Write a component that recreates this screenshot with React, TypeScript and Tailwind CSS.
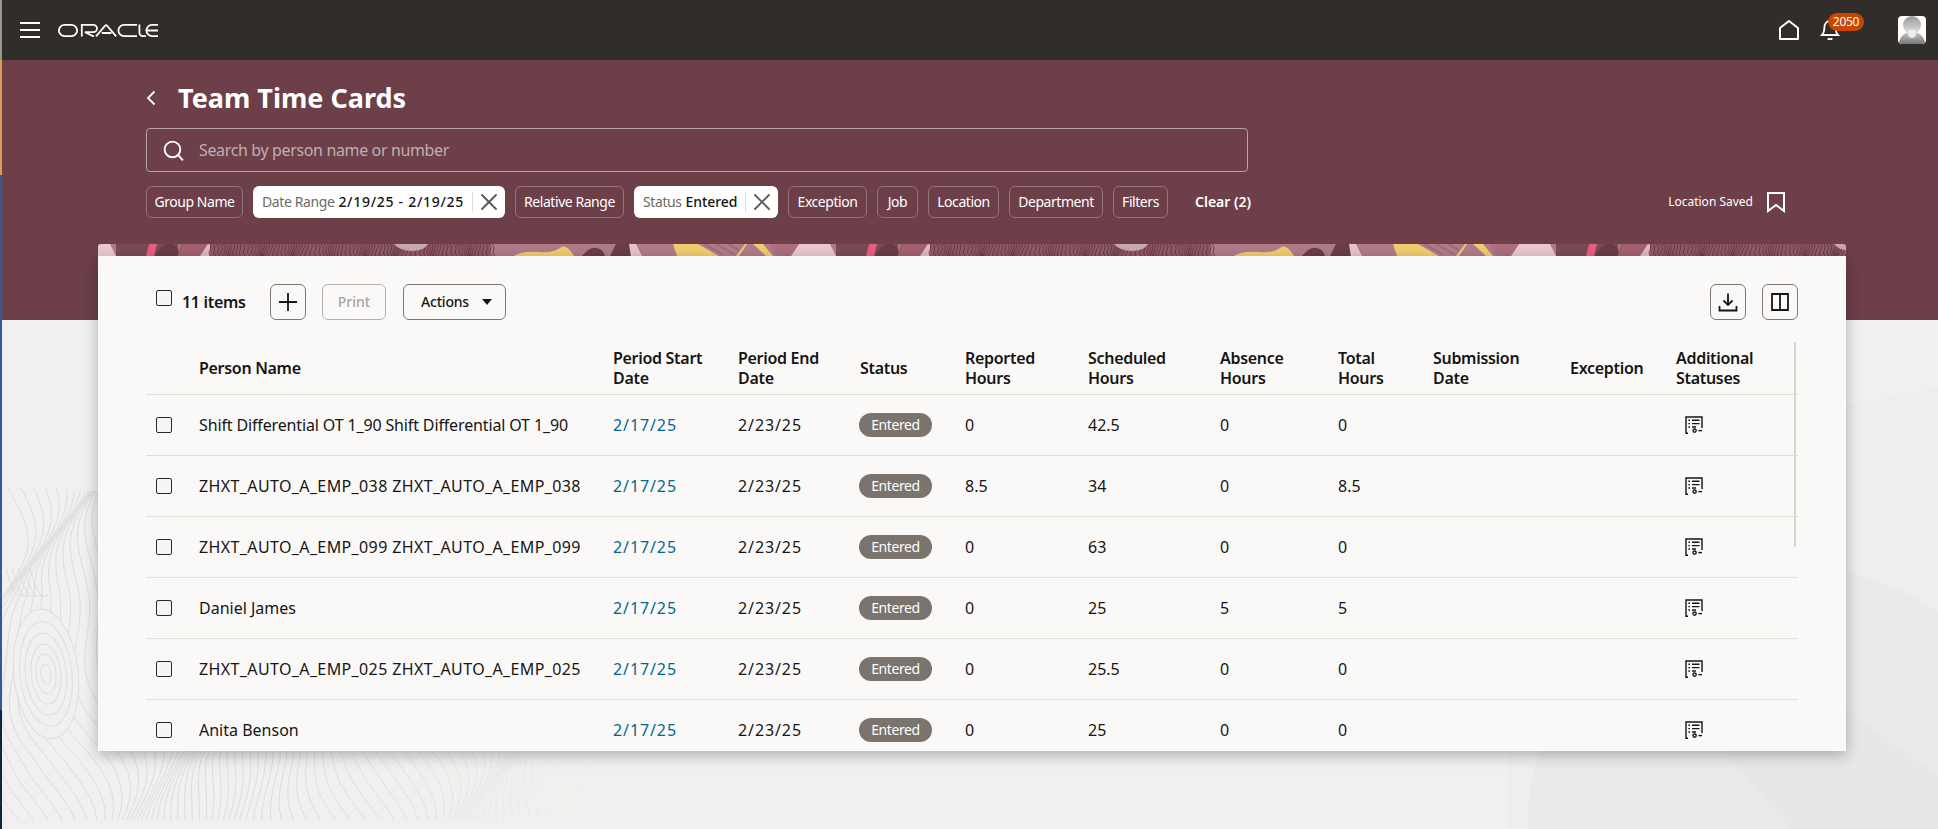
import { X } from "lucide-react";

const GRID =
  "grid grid-cols-[53px_414px_125px_122px_105px_123px_132px_118px_95px_137px_106px_122px]";

const rows = [
  { name: "Shift Differential OT 1_90 Shift Differential OT 1_90", nameClass: "tracking-[-0.14px]", reported: "0", scheduled: "42.5", absence: "0", total: "0" },
  { name: "ZHXT_AUTO_A_EMP_038 ZHXT_AUTO_A_EMP_038", nameClass: "tracking-[0.38px]", reported: "8.5", scheduled: "34", absence: "0", total: "8.5" },
  { name: "ZHXT_AUTO_A_EMP_099 ZHXT_AUTO_A_EMP_099", nameClass: "tracking-[0.38px]", reported: "0", scheduled: "63", absence: "0", total: "0" },
  { name: "Daniel James", nameClass: "", reported: "0", scheduled: "25", absence: "5", total: "5" },
  { name: "ZHXT_AUTO_A_EMP_025 ZHXT_AUTO_A_EMP_025", nameClass: "tracking-[0.38px]", reported: "0", scheduled: "25.5", absence: "0", total: "0" },
  { name: "Anita Benson", nameClass: "", reported: "0", scheduled: "25", absence: "0", total: "0" },
];

const headers = [
  "",
  "Person Name",
  "Period Start Date",
  "Period End Date",
  "Status",
  "Reported Hours",
  "Scheduled Hours",
  "Absence Hours",
  "Total Hours",
  "Submission Date",
  "Exception",
  "Additional Statuses",
];

function OracleLogo() {
  return (
    <svg width="100" height="13" viewBox="0 0 100 13" fill="none" stroke="#ffffff" strokeWidth="1.8" className="ml-[18px]">
      <rect x="0.9" y="0.9" width="18.2" height="11.2" rx="5.6" />
      <path d="M23.8 12.6V.9h11.5a3.4 3.4 0 0 1 0 7.3H27l9 4.4" />
      <path d="M38 12.4 47.2 1.6a1.2 1.2 0 0 1 1.8 0l9.2 10.8M43.8 9h9.6" />
      <path d="M79 .9H66a5.6 5.6 0 0 0 0 11.200h13" />
      <path d="M81.4.4V8.600a3.500 3.500 0 0 0 3.500 3.500h3" />
      <path d="M100 .9h-6a5.600 5.600 0 0 0 0 11.200h6M89.400 6.500H100" />
    </svg>
  );
}

function StatusIcon() {
  return (
    <svg width="18" height="18" viewBox="0 0 18 18" fill="none" stroke="#161513" strokeWidth="1.4" className="ml-[9px]">
      <path d="M3 17.200H1V1h16v11" />
      <path d="M3.400 4.200h1.600M7 4.200h7.500M3.400 7.600h1.600M7 7.600h7.500M3.400 11h1.600M7 11h4" />
      <circle cx="9.600" cy="14.600" r="1.600" />
      <path d="M13.400 14.600H17" />
    </svg>
  );
}

function Checkbox({ className = "" }: { className?: string }) {
  return <div className={`ml-[10px] h-4 w-4 rounded-[2px] border-[1.5px] border-[#2b2826] bg-[#f6f5f3] ${className}`} />;
}

// one 720px wide repeat of the banner strip above the card
function StripTile({ x }: { x: number }) {
  const lines = [];
  for (let i = 0; i < 95; i++) {
    const px = 112 + i * 3;
    const lean = 4 * Math.sin(i * 0.55) + 3 * Math.sin(i * 0.17);
    lines.push(
      <path
        key={i}
        d={`M${px} 0q${(lean / 2 + 2).toFixed(1)} 3 ${(lean / 2).toFixed(1)} 6t${(lean / 2).toFixed(1)} 6`}
        stroke="#5f343e"
        strokeWidth="0.8"
        fill="none"
      />,
    );
  }
  return (
    <g transform={`translate(${x} 0)`}>
      <rect width="720" height="12" fill="#b27c8a" />
      <rect x="18" width="62" height="12" fill="#7c4a55" />
      <path d="M0 0h12l6 12H0zM693 12 701 0h19v12z" fill="#ecc8d1" />
      <path d="M51 0h8l-3 12h-8z" fill="#e8607f" />
      <path d="M58 12q4-10 10-12h6q7 3 8 12z" fill="#6b3d47" />
      <path d="M82 0h28l-8 12H80z" fill="#a4606f" />
      <path d="M102 12 110 0h10v12z" fill="#e2bac5" />
      <rect x="112" width="280" height="12" fill="#93596a" />
      {lines}
      <path d="M296 0h34q-4 7-16 7t-18-7z" fill="#d3bac0" opacity="0.85" />
      <path d="M416 12q8-5 24-4t22-4 14 8z" fill="#f1ce6e" />
      <path d="M484 12q8-10 15-8t8 8z" fill="#6b3d47" />
      <path d="M512 12 518 0h13l2 12z" fill="#6b3d47" />
      <path d="M531 0h7l6 12h-11z" fill="#e7c4cd" />
      <path d="M575 0h25l21 12h-42z" fill="#f1ce6e" />
      <path d="M606 0l18 10M618 0l18 10M630 0l14 8" stroke="#a06a78" strokeWidth="2" />
      <path d="M638 12 647 0h2l-8 12z" fill="#f1ce6e" />
      <path d="M655 0h10l10 12h-7z" fill="#f1ce6e" />
      <path d="M672 0h29l-8 12h-14z" fill="#a4606f" opacity="0.45" />
    </g>
  );
}

// contour lines in the lower left of the page
function Contours() {
  const lines = [];
  for (let i = 0; i < 90; i++) {
    const x0 = -10 + i * 8;
    let d = "";
    for (let y = 490; y <= 835; y += 12) {
      const x =
        x0 +
        26 * Math.sin(y / 68 + i * 0.16) +
        11 * Math.sin(y / 27 + i * 0.3) +
        (y > 600 && y < 760 ? 22 * Math.sin((i - 14) / 7) * Math.sin(((y - 600) / 160) * Math.PI) : 0);
      d += `${d ? "L" : "M"}${x.toFixed(1)} ${y}`;
    }
    const opacity = x0 < 320 ? 1 : Math.max(0, 1 - (x0 - 320) / 300);
    lines.push(<path key={i} d={d} opacity={opacity} />);
  }
  const rings = [8, 16, 24, 33, 42, 52].map((r) => (
    <ellipse key={r} cx="44" cy="680" rx={r * 0.62} ry={r * 1.25} transform="rotate(-6 44 680)" fill="#f1f0ee" />
  ));
  const hatch = [0, 1, 2, 3, 4].map((i) => (
    <path key={i} d={`M${4 + i * 6} 575q4 14 8 22t10 4`} />
  ));
  return (
    <svg width="700" height="345" viewBox="0 490 700 345" fill="none" stroke="#dfdddb" strokeWidth="1" className="absolute bottom-0 left-[2px]">
      {lines}
      {rings.slice().reverse()}
      {hatch}
      <path d="M0 470h700v85Q420 530 230 510T0 494z" fill="#f1f0ee" stroke="none" />
    </svg>
  );
}

function Backdrop() {
  return (
    <>
      <div className="absolute top-[320px] bottom-0 left-0 right-0 bg-[#f1f0ee]" />
      <Contours />
      <svg width="430" height="509" viewBox="1508 320 430 509" className="absolute right-0 bottom-0">
        <path d="M1508 470 1938 387V829H1508z" fill="#efeeec" />
        <circle cx="1790" cy="829" r="263" fill="#ebeae8" />
        <path d="M1468 443 1938 775V829H1790z" fill="#e8e7e5" />
      </svg>
      <div className="absolute top-0 bottom-0 left-0 z-20 flex w-[2px] flex-col">
        <div className="h-[60px] bg-[#9a9793]" />
        <div className="h-[115px] bg-[#e29a4f]" />
        <div className="h-[535px] bg-[#2f5c93]" />
        <div className="flex-1 bg-[#142440]" />
      </div>
    </>
  );
}

function Chip({ label, width }: { label: string; width: string }) {
  return (
    <div className={`flex h-8 items-center justify-center rounded-md border border-[#96747c] text-sm tracking-[-0.45px] text-white ${width}`}>
      {label}
    </div>
  );
}

function ActiveChip({ label, value, width, valueClass }: { label: string; value: string; width: string; valueClass: string }) {
  return (
    <div className={`flex h-8 items-center rounded-md bg-white pl-[9px] text-sm ${width}`}>
      <span className="tracking-[-0.4px] text-[#6f6965]">{label}</span>
      <span className={`ml-1 whitespace-nowrap font-medium text-[#161513] ${valueClass}`}>{value}</span>
      <span className="ml-2 h-5 w-px shrink-0 bg-[#dcd9d6]" />
      <X className="ml-[2px] h-7 w-7 shrink-0 text-[#5f5a57]" strokeWidth={1.6} />
    </div>
  );
}

export default function App() {
  return (
    <div className="relative h-[829px] w-full overflow-hidden bg-[#f1f0ee] font-['Noto_Sans',sans-serif] text-[#161513]">
      <Backdrop />

      <header className="relative z-10 flex h-[60px] items-center bg-[#312d2a] pl-5">
        <div className="flex w-5 flex-col gap-[5px]">
          <span className="h-[2px] bg-white" />
          <span className="h-[2px] bg-white" />
          <span className="h-[2px] bg-white" />
        </div>
        <OracleLogo />
        <div className="ml-auto flex items-center">
          <svg width="22" height="22" viewBox="0 0 22 22" fill="none" stroke="#ffffff" strokeWidth="2" className="-ml-[2px]">
            <path d="M2 20V9l9-7 9 7v11z" strokeLinejoin="round" />
          </svg>
          <div className="relative ml-[20px] h-[22px] w-[20px]">
            <svg width="20" height="22" viewBox="0 0 20 22" fill="none" stroke="#ffffff" strokeWidth="1.8">
              <path d="M2 16c2-2 2.400-4 2.400-7.400C4.400 4.800 6.800 2 10 2s5.600 2.800 5.600 6.600c0 3.400.4 5.400 2.400 7.400z" />
              <path d="M7.600 19.400q2.400 1.600 4.800 0" />
            </svg>
            <div className="absolute -top-[6px] left-[8px] flex h-[18px] w-9 items-center justify-center rounded-full bg-[#c74600] text-[12px] tracking-[-0.3px] text-white">
              2050
            </div>
          </div>
          <div className="relative ml-[58px] mr-3 h-7 w-7 overflow-hidden rounded-[4px] bg-white">
            <div className="absolute top-0 left-[5px] h-[18px] w-[18px] rounded-full bg-gradient-to-b from-[#9a9a9a] to-[#e2e2e2]" />
            <div className="absolute bottom-0 left-[1px] h-[12px] w-[26px] rounded-t-[12px] bg-gradient-to-b from-[#c9c9c9] to-[#777777]" />
            <div className="absolute bottom-[6px] left-[10px] h-[8px] w-[8px] rounded-b-full bg-[#ececec]" />
          </div>
        </div>
      </header>

      <section className="relative h-[260px] bg-[#6c3f49] pl-[146px] pr-[153px] pt-5 text-white">
        <div className="flex h-9 items-center">
          <svg width="10" height="16" viewBox="0 0 10 16" fill="none" stroke="#ffffff" strokeWidth="1.8">
            <path d="M8.500 1.500 2 8l6.500 6.500" />
          </svg>
          <h1 className="ml-[22px] text-[27px] font-bold leading-9">Team Time Cards</h1>
        </div>
        <div className="mt-3 flex h-11 w-[1102px] items-center rounded-[4px] border border-[#b6a3a7] pl-[14px]">
          <svg width="25" height="25" viewBox="0 0 24 24" fill="none" stroke="#ffffff" strokeWidth="1.8">
            <circle cx="11" cy="11" r="7.500" />
            <path d="m16.500 16.500 4.500 5" />
          </svg>
          <span className="ml-[13px] text-base tracking-[-0.36px] text-[#c2aeb2]">Search by person name or number</span>
        </div>
        <div className="mt-[14px] flex items-center gap-[10px]">
          <Chip label="Group Name" width="w-[97px]" />
          <ActiveChip label="Date Range" value="2/19/25 - 2/19/25" valueClass="tracking-[0.72px]" width="w-[252px]" />
          <Chip label="Relative Range" width="w-[109px]" />
          <ActiveChip label="Status" value="Entered" valueClass="tracking-[-0.1px]" width="w-[144px]" />
          <Chip label="Exception" width="w-[79px]" />
          <Chip label="Job" width="w-[41px]" />
          <Chip label="Location" width="w-[71px]" />
          <Chip label="Department" width="w-[94px]" />
          <Chip label="Filters" width="w-[55px]" />
          <span className="ml-[17px] text-sm font-semibold">Clear (2)</span>
          <span className="ml-auto text-[12px]">Location Saved</span>
          <svg width="18" height="21" viewBox="0 0 18 21" fill="none" stroke="#ffffff" strokeWidth="2" className="ml-[4px]">
            <path d="M1 1h16v18l-8-6-8 6z" />
          </svg>
        </div>
      </section>

      <div className="relative z-10 mx-[98px] -mt-[76px] h-3 w-[1748px]">
        <svg width="1748" height="12" viewBox="0 0 1748 12" className="block rounded-t-[3px]">
          <StripTile x={0} />
          <StripTile x={720} />
          <StripTile x={1440} />
        </svg>
      </div>

      <main className="relative z-10 mx-[98px] h-[495px] w-[1748px] overflow-hidden bg-[#fbf9f8] px-12 shadow-[0_4px_14px_rgba(0,0,0,0.28)]">
        <div className="mt-7 flex h-9 items-center">
          <Checkbox className="mb-2" />
          <span className="ml-[10px] w-[64px] whitespace-nowrap text-base font-semibold tracking-[-0.3px]">11 items</span>
          <button className="ml-6 flex h-9 w-9 items-center justify-center rounded-md border border-[#7d7976]">
            <svg width="20" height="20" viewBox="0 0 20 20" stroke="#161513" strokeWidth="1.8">
              <path d="M10 1v18M1 10h18" />
            </svg>
          </button>
          <button className="ml-4 flex h-9 w-16 items-center justify-center rounded-md border border-[#b4b0ad] text-sm font-medium text-[#a8a4a1]">
            Print
          </button>
          <button className="ml-[17px] flex h-9 w-[103px] items-center rounded-md border border-[#7d7976] pl-[17px] text-sm font-medium tracking-[-0.2px]">
            Actions
            <svg width="10" height="6" viewBox="0 0 10 6" className="ml-[13px]" fill="#161513">
              <path d="M0 0h10L5 6z" />
            </svg>
          </button>
          <button className="ml-auto flex h-9 w-9 items-center justify-center rounded-md border border-[#7d7976]">
            <svg width="20" height="20" viewBox="0 0 20 20" fill="none" stroke="#161513" strokeWidth="1.8">
              <path d="M10 1.500v11M5.500 8.500l4.500 4.500 4.500-4.500M1.500 14v4.500h17V14" />
            </svg>
          </button>
          <button className="ml-4 flex h-9 w-9 items-center justify-center rounded-md border border-[#7d7976]">
            <svg width="18" height="18" viewBox="0 0 18 18" fill="none" stroke="#161513" strokeWidth="1.8">
              <path d="M1 1h16v16H1zM9 1v16" />
            </svg>
          </button>
        </div>

        <div className="relative mt-[22px]">
          <div className="absolute top-0 right-[2px] z-10 h-[205px] w-[2px] bg-[#d6d4d1]" />
          <div className={`${GRID} h-[53px] items-center border-b border-[#e1dfdc] text-base font-semibold leading-5 tracking-[-0.3px]`}>
            {headers.map((h, i) => (
              <div key={i} className="pr-4">
                {h}
              </div>
            ))}
          </div>
          {rows.map((row) => (
            <div key={row.name} className={`${GRID} h-[61px] items-center border-b border-[#e1dfdc] text-base`}>
              <Checkbox />
              <div className={`whitespace-nowrap ${row.nameClass}`}>{row.name}</div>
              <div className="tracking-[0.9px] text-[#00688c]">2/17/25</div>
              <div className="tracking-[0.9px]">2/23/25</div>
              <div>
                <span className="-ml-px flex h-6 w-[73px] items-center justify-center rounded-full bg-[#7a736e] text-sm tracking-[-0.4px] text-white">
                  Entered
                </span>
              </div>
              <div>{row.reported}</div>
              <div>{row.scheduled}</div>
              <div>{row.absence}</div>
              <div>{row.total}</div>
              <div />
              <div />
              <StatusIcon />
            </div>
          ))}
        </div>
      </main>
    </div>
  );
}
